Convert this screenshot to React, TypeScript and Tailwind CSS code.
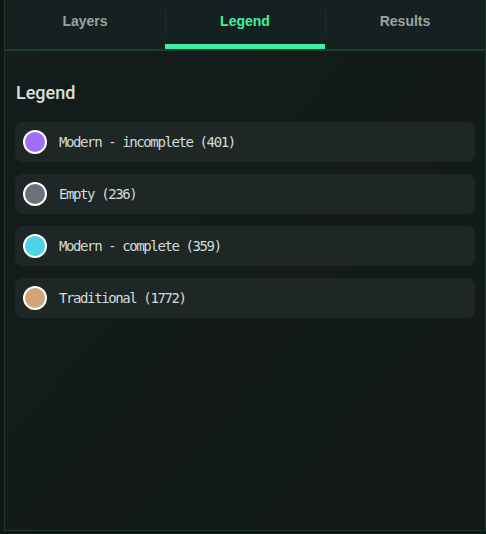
import { useState } from "react";

type LegendItem = {
  label: string;
  count: number;
  color: string;
};

const legendItems: LegendItem[] = [
  { label: "Modern - incomplete", count: 401, color: "bg-[#a16ef5]" },
  { label: "Empty", count: 236, color: "bg-[#6c727c]" },
  { label: "Modern - complete", count: 359, color: "bg-[#4dd3e6]" },
  { label: "Traditional", count: 1772, color: "bg-[#d4a477]" },
];

const tabs = ["Layers", "Legend", "Results"];

export default function App() {
  const [activeTab, setActiveTab] = useState("Legend");

  return (
    <div className="h-[534px] w-[486px] bg-[#0f1715] pl-[4px] pb-[3px]">
      <div className="flex h-[531px] flex-col border-x border-b border-[#1b3a2d] bg-gradient-to-br from-[#141d1b] to-[#121917]">
        <nav className="flex h-[51px] shrink-0 border-b-2 border-[#1d3d30] bg-[#152120]">
          {tabs.map((tab, index) => {
            const isActive = tab === activeTab;

            return (
              <button
                key={tab}
                type="button"
                onClick={() => setActiveTab(tab)}
                className={
                  "relative flex flex-1 items-start justify-center pt-[11px] font-['Liberation_Sans',Arial,sans-serif] text-[14px] font-bold " +
                  (isActive ? "text-[#3ef0a0]" : "text-[#9aa3a1]")
                }
              >
                {tab}
                {index > 0 && (
                  <span className="absolute left-0 top-[10px] h-[25px] w-px bg-[#1f2d2a]" />
                )}
                {isActive && (
                  <span className="absolute bottom-0 left-0 right-0 h-[5px] bg-[#3ef0a0]" />
                )}
              </button>
            );
          })}
        </nav>

        <section className="px-[10px] pt-[31px]">
          <h2 className="pl-px font-['Roboto',sans-serif] text-[18px] font-medium leading-[22px] text-[#d8e0dd]">
            Legend
          </h2>

          <ul className="mt-[18px] flex flex-col gap-[12px]">
            {legendItems.map((item) => (
              <li
                key={item.label}
                className="flex h-[40px] items-center gap-[12px] rounded-lg bg-[#1e2725] px-[8px]"
              >
                <span
                  className={
                    "h-[24px] w-[24px] shrink-0 rounded-full border-2 border-white " +
                    item.color
                  }
                />
                <span className="font-['DejaVu_Sans_Mono',monospace] text-[14px] tracking-[-1.4px] text-[#d4dcd9]">
                  {item.label} ({item.count})
                </span>
              </li>
            ))}
          </ul>
        </section>
      </div>
    </div>
  );
}
